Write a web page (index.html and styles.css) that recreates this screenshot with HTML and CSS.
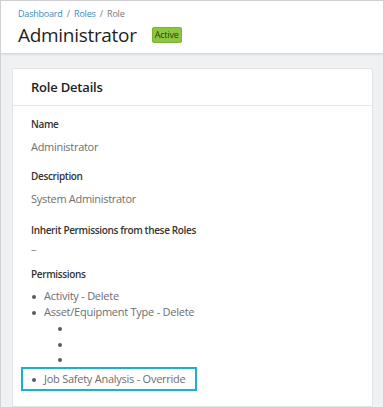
FILE: index.html
```html
<!DOCTYPE html>
<html lang="en">
<head>
    <meta charset="UTF-8">
    <meta name="viewport" content="width=device-width, initial-scale=1.0">
    <title>Role - Administrator</title>
    <link rel="stylesheet" href="styles.css">
</head>
<body>
    <div class="frame">
        <header class="page-header">
            <nav class="breadcrumb">
                <a href="#">Dashboard</a>
                <span class="sep">/</span>
                <a href="#">Roles</a>
                <span class="sep">/</span>
                <span class="current">Role</span>
            </nav>
            <div class="title-row">
                <h1>Administrator</h1>
                <span class="badge">Active</span>
            </div>
        </header>

        <main class="content">
            <section class="card">
                <div class="card-header">Role Details</div>
                <div class="card-body">
                    <div class="field">
                        <div class="field-label">Name</div>
                        <div class="field-value">Administrator</div>
                    </div>
                    <div class="field">
                        <div class="field-label">Description</div>
                        <div class="field-value">System Administrator</div>
                    </div>
                    <div class="field field-inherit">
                        <div class="field-label">Inherit Permissions from these Roles</div>
                        <div class="field-value empty">–</div>
                    </div>
                    <div class="field">
                        <div class="field-label">Permissions</div>
                        <ul class="perm-list">
                            <li>Activity - Delete</li>
                            <li>Asset/Equipment Type - Delete
                                <ul class="perm-sub">
                                    <li></li>
                                    <li></li>
                                    <li></li>
                                </ul>
                            </li>
                            <li class="highlight">Job Safety Analysis - Override</li>
                        </ul>
                    </div>
                </div>
            </section>
        </main>
    </div>
</body>
</html>
```

FILE: styles.css
```css
* {
    box-sizing: border-box;
}
body {
    margin: 0;
    font-family: 'Open Sans', 'Noto Sans', sans-serif;
    color: #333;
    background-color: #fff;
}
.frame {
    width: 384px;
    height: 408px;
    border: 1px solid #cfd1d4;
    overflow: hidden;
    background-color: #f0f1f3;
    display: flex;
    flex-direction: column;
}
.page-header {
    background-color: white;
    padding: 6px 17px 0;
    height: 53px;
    border-bottom: 1px solid #d6d8db;
    box-shadow: 0 1px 2px rgba(0, 0, 0, 0.08);
    flex-shrink: 0;
}
.breadcrumb {
    font-size: 9px;
    letter-spacing: -0.2px;
    line-height: 14px;
    color: #777;
}
.breadcrumb a {
    color: #3a8cc0;
    text-decoration: none;
}
.breadcrumb .sep {
    margin: 0 2px;
    color: #777;
}
.title-row {
    display: flex;
    align-items: center;
    gap: 15px;
    margin-top: 2px;
}
h1 {
    margin: 0;
    font-size: 19px;
    letter-spacing: -0.3px;
    font-weight: 400;
    line-height: 24px;
    color: #1f1f1f;
}
.badge {
    background-color: #8cc63f;
    border: 1px solid #7cb32f;
    color: #2b4010;
    font-size: 9px;
    letter-spacing: -0.2px;
    line-height: 12px;
    padding: 1px 2px;
    border-radius: 2px;
}
.content {
    flex: 1;
    padding: 14px 10px 0 11px;
}
.card {
    background-color: white;
    border: 1px solid #e1e3e6;
    border-radius: 2px;
    height: 100%;
}
.card-header {
    height: 37px;
    line-height: 36px;
    padding: 0 18px;
    font-size: 13px;
    letter-spacing: -0.2px;
    font-weight: 600;
    color: #222;
    border-bottom: 1px solid #e4e6e8;
}
.card-body {
    padding: 10px 18px 0;
}
.field {
    margin-bottom: 12px;
}
.field-inherit {
    margin-top: 14px;
    margin-bottom: 13px;
}
.field-label {
    font-size: 10px;
    letter-spacing: -0.35px;
    font-weight: 600;
    line-height: 16px;
    color: #333;
    margin-bottom: 6px;
}
.field-value {
    font-size: 11px;
    letter-spacing: -0.3px;
    line-height: 18px;
    color: #6f6f6f;
}
.field-value.empty {
    line-height: 9px;
    font-size: 11px;
    color: #888;
}
.perm-list {
    list-style: none;
    margin: 6px 0 0;
    padding: 0;
    font-size: 11px;
    letter-spacing: -0.25px;
    line-height: 16px;
    color: #6d6d73;
}
.perm-list li::before {
    content: "";
    display: inline-block;
    width: 4px;
    height: 4px;
    border-radius: 50%;
    background-color: #5a5a60;
    margin: 0 8px 0 1px;
    vertical-align: middle;
}
.perm-sub {
    list-style: none;
    margin: 0;
    padding-left: 26px;
}
.perm-sub li {
    height: 15.5px;
}
.perm-list .highlight {
    width: fit-content;
    margin: 0 0 0 -10px;
    padding: 2px 9px 2px 8px;
    border: 2px solid #19b0da;
}
```
